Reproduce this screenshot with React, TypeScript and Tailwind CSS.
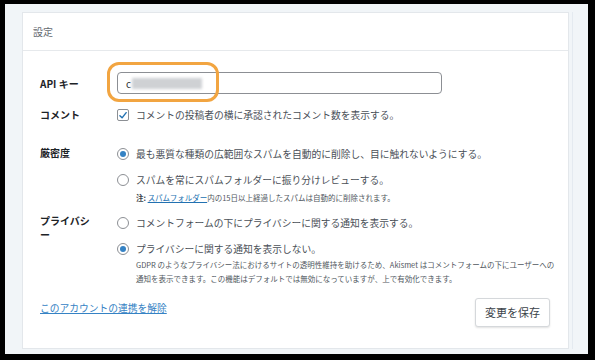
import React from "react";

const F = "font-['Noto_Sans_CJK_JP','Noto_Sans',sans-serif]";

function Radio({ checked }: { checked?: boolean }) {
  return (
    <span className="flex h-[12px] w-[12px] shrink-0 items-center justify-center rounded-full border border-[#8c8f94] bg-white">
      {checked && <span className="h-[6px] w-[6px] rounded-full bg-[#3582c4]" />}
    </span>
  );
}

function Checkbox() {
  return (
    <span className="flex h-[12px] w-[12px] shrink-0 items-center justify-center rounded-[2px] border border-[#8c8f94] bg-white">
      <svg viewBox="0 0 12 12" className="h-[11px] w-[11px]">
        <path d="M2.3 6.2 L4.9 8.8 L9.8 2.6" fill="none" stroke="#2271b1" strokeWidth="1.7" strokeLinecap="round" strokeLinejoin="round" />
      </svg>
    </span>
  );
}

export default function App() {
  return (
    <div className={`h-[360px] w-[595px] bg-black pl-[5px] pr-[7px] pt-[4px] pb-[6px] ${F}`}>
      <div className="flex h-full w-full bg-[#f1f5f8] pl-[17px] pt-[8px] pb-[5px]">
        <div className="flex w-[547px] flex-col border border-[#e3e7eb] bg-white">
          <div className="flex h-[38px] items-center border-b border-[#e6e9ec] pl-[10px] text-[10px] text-[#646970]">
            設定
          </div>
          <div className="flex flex-1 flex-col pl-[17px] pr-[18px] pt-[21px] text-[9.75px] text-[#4a5057]">
            {/* API key */}
            <div className="flex items-center">
              <div className="w-[77px] shrink-0 text-[10px] font-bold text-[#1d2327]">API キー</div>
              <div className="relative">
                <div className="flex h-[22px] w-[325px] items-center rounded-[4px] border border-[#8c8f94] bg-white pl-[8px]">
                  <span className="text-[10px] text-[#2c3338]">c</span>
                  <span className="ml-[1px] h-[11px] w-[70px] bg-[#cfd1d4] blur-[1.5px]" />
                </div>
                <div className="absolute left-[-10px] top-[-10px] h-[40px] w-[112px] rounded-[12px] border-[3px] border-[#f2a541]" />
              </div>
            </div>
            {/* Comment */}
            <div className="mt-[13px] flex items-center leading-[16px]">
              <div className="w-[77px] shrink-0 text-[10px] font-bold text-[#1d2327]">コメント</div>
              <Checkbox />
              <span className="ml-[7px]">コメントの投稿者の横に承認されたコメント数を表示する。</span>
            </div>
            {/* Strictness */}
            <div className="mt-[23px] flex">
              <div className="w-[77px] shrink-0 text-[10px] font-bold leading-[14px] text-[#1d2327]">厳密度</div>
              <div className="flex flex-col">
                <div className="flex items-center leading-[16px]">
                  <Radio checked />
                  <span className="ml-[7px]">最も悪質な種類の広範囲なスパムを自動的に削除し、目に触れないようにする。</span>
                </div>
                <div className="mt-[10px] flex items-center leading-[16px]">
                  <Radio />
                  <span className="ml-[7px]">スパムを常にスパムフォルダーに振り分けレビューする。</span>
                </div>
                <div className="mt-[4px] whitespace-nowrap pl-[19px] text-[7.5px] leading-[11px] text-[#50575e]">
                  <span className="font-bold text-[#3c434a]">注:</span>{" "}
                  <span className="text-[#2271b1] underline">スパムフォルダー</span>内の15日以上経過したスパムは自動的に削除されます。
                </div>
              </div>
            </div>
            {/* Privacy */}
            <div className="mt-[12px] flex">
              <div className="mt-[-1px] w-[77px] shrink-0">
                <div className="w-[56px] text-[10px] font-bold leading-[14px] text-[#1d2327]">プライバシー</div>
              </div>
              <div className="flex flex-col">
                <div className="flex items-center leading-[16px]">
                  <Radio />
                  <span className="ml-[7px]">コメントフォームの下にプライバシーに関する通知を表示する。</span>
                </div>
                <div className="mt-[10px] flex items-center leading-[16px]">
                  <Radio checked />
                  <span className="ml-[7px]">プライバシーに関する通知を表示しない。</span>
                </div>
                <div className="mt-[1px] whitespace-nowrap pl-[19px] text-[7.5px] leading-[14px] text-[#50575e]">
                  GDPR のようなプライバシー法におけるサイトの透明性維持を助けるため、Akismet はコメントフォームの下にユーザーへの
                  <br />
                  通知を表示できます。この機能はデフォルトでは無効になっていますが、上で有効化できます。
                </div>
              </div>
            </div>
            {/* Footer */}
            <div className="mt-[12px] flex items-start justify-between">
              <a className="mt-[3px] text-[9.75px] leading-[14px] text-[#3582c4] underline">このアカウントの連携を解除</a>
              <button className="flex h-[29px] w-[75px] items-center justify-center rounded-[3px] border border-[#d5d8db] bg-white text-[11px] text-[#3c434a] shadow-[0_1px_2px_rgba(0,0,0,0.12)]">
                変更を保存
              </button>
            </div>
          </div>
        </div>
        <div className="ml-[3px] w-[2px] border-l border-[#e4eaf0]" />
      </div>
    </div>
  );
}
